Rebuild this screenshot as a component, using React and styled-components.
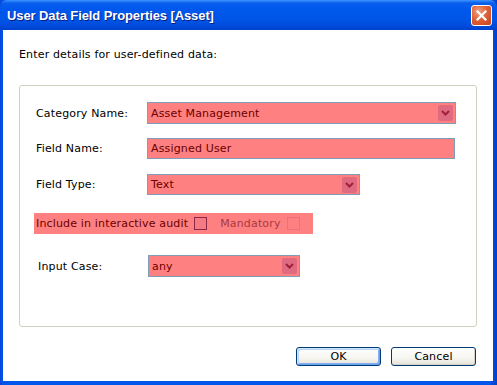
import React from "react";
import styled, { createGlobalStyle } from "styled-components";

const Global = createGlobalStyle`
  html, body { margin: 0; padding: 0; background: #fff; }
  body { font-family: "DejaVu Sans", Verdana, sans-serif; font-size: 11px; letter-spacing: 0.16px; }
`;

const Window = styled.div`
  width: 497px;
  height: 385px;
  display: flex;
  flex-direction: column;
  background: linear-gradient(90deg, #0a46d8 0px, #0055ea 3px, #0055ea 490px, #0040c8 497px);
  box-sizing: border-box;
`;

const TitleBar = styled.div`
  height: 30px;
  flex: 0 0 30px;
  display: flex;
  align-items: center;
  justify-content: space-between;
  padding: 0 5px 0 7px;
  box-sizing: border-box;
  border-radius: 7px 7px 0 0;
  background: linear-gradient(180deg, #3d95ff 0px, #0a5fea 3px, #0058ee 8px, #0055e6 20px, #0048d8 27px, #0040cc 30px);
`;

const Title = styled.span`
  color: #fff;
  font-family: "Liberation Sans", Arial, sans-serif;
  font-weight: bold;
  font-size: 13px;
  letter-spacing: -0.1px;
  text-shadow: 1px 1px 0 #0a1e80;
`;

const CloseButton = styled.div`
  width: 19px;
  height: 19px;
  margin-top: 1px;
  border: 1px solid #fff;
  border-radius: 3px;
  background: radial-gradient(circle at 35% 30%, #f0a080 0%, #e0623a 45%, #c8401a 100%);
  display: flex;
  align-items: center;
  justify-content: center;
`;

const Body = styled.div`
  flex: 1;
  margin: 0 4px 4px 3px;
  background: #fff;
  display: flex;
  flex-direction: column;
  padding: 18px 16px 0 16px;
  color: #000;
`;

const Intro = styled.div`
  line-height: 14px;
`;

const Group = styled.div`
  margin-top: 23px;
  height: 242px;
  box-sizing: border-box;
  border: 1px solid #d0d0bf;
  border-radius: 3px;
  padding: 16px 0 0 16px;
  display: flex;
  flex-direction: column;
`;

const Row = styled.div`
  display: flex;
  align-items: center;
  margin-top: ${(p) => p.$gap || 0}px;
  height: ${(p) => p.$h || 22}px;
`;

const Label = styled.div`
  width: ${(p) => p.$w || 111}px;
  padding-left: ${(p) => p.$indent || 0}px;
  box-sizing: border-box;
  flex: 0 0 auto;
`;

const Field = styled.div`
  width: ${(p) => p.$w}px;
  height: ${(p) => p.$h || 22}px;
  box-sizing: border-box;
  border: 1px solid #7f9db9;
  background: #ff8080;
  color: #6a0000;
  display: flex;
  align-items: center;
  justify-content: space-between;
  padding: 0 2px 0 3px;
`;

const DropButton = styled.div`
  width: 15px;
  height: 16px;
  border-radius: 2px;
  background: #e06a80;
  display: flex;
  align-items: center;
  justify-content: center;
`;

const AuditStrip = styled.div`
  display: flex;
  align-items: center;
  width: 279px;
  height: 21px;
  margin-left: -2px;
  padding-left: 2px;
  box-sizing: border-box;
  background: #ff8080;
  color: #6a0000;
`;

const Check = styled.div`
  width: 13px;
  height: 13px;
  box-sizing: border-box;
  border: 1px solid ${(p) => (p.$disabled ? "#ee7080" : "#8c2848")};
  background: ${(p) => (p.$disabled ? "#ff8080" : "#f57a82")};
  margin-left: ${(p) => p.$ml}px;
`;

const Muted = styled.span`
  color: #a83a40;
  margin-left: 13px;
`;

const Buttons = styled.div`
  display: flex;
  justify-content: flex-end;
  gap: 10px;
  margin-top: 20px;
  padding-right: 1px;
`;

const Button = styled.div`
  width: 85px;
  height: 19px;
  box-sizing: border-box;
  border: 1px solid #003c74;
  border-radius: 3px;
  display: flex;
  align-items: center;
  justify-content: center;
  background: linear-gradient(180deg, #ffffff 0%, #f6f5f0 60%, #e3e1d6 100%);
  box-shadow: ${(p) =>
    p.$default
      ? "inset 1px 1px 0 #cee7ff, inset -1px -1px 0 #69a3ec, inset 2px 2px 0 #bcd4f6, inset -2px -2px 0 #89adf4"
      : "inset -1px -1px 0 #d6d0c5"};
`;

const Chevron = () => (
  <svg width="9" height="6" viewBox="0 0 9 6">
    <path d="M1 1 L4.5 4.5 L8 1" fill="none" stroke="#a0203c" strokeWidth="2" />
  </svg>
);

const Select = ({ w, h, children }) => (
  <Field $w={w} $h={h}>
    <span>{children}</span>
    <DropButton>
      <Chevron />
    </DropButton>
  </Field>
);

export default function App() {
  return (
    <>
      <Global />
      <Window>
        <TitleBar>
          <Title>User Data Field Properties [Asset]</Title>
          <CloseButton>
            <svg width="11" height="11" viewBox="0 0 11 11">
              <path d="M1.5 1.5 L9.5 9.5 M9.5 1.5 L1.5 9.5" stroke="#fff" strokeWidth="2.2" strokeLinecap="square" />
            </svg>
          </CloseButton>
        </TitleBar>
        <Body>
          <Intro>Enter details for user-defined data:</Intro>
          <Group>
            <Row $h={22}>
              <Label>Category Name:</Label>
              <Select w={309} h={22}>Asset Management</Select>
            </Row>
            <Row $gap={14} $h={21}>
              <Label>Field Name:</Label>
              <Field $w={308} $h={21}>Assigned User</Field>
            </Row>
            <Row $gap={15} $h={21}>
              <Label>Field Type:</Label>
              <Select w={213} h={21}>Text</Select>
            </Row>
            <Row $gap={18} $h={21}>
              <AuditStrip>
                Include in interactive audit
                <Check $ml={6} />
                <Muted>Mandatory</Muted>
                <Check $ml={6} $disabled />
              </AuditStrip>
            </Row>
            <Row $gap={21} $h={22}>
              <Label $indent={2} $w={112}>Input Case:</Label>
              <Select w={152} h={22}>any</Select>
            </Row>
          </Group>
          <Buttons>
            <Button $default>OK</Button>
            <Button>Cancel</Button>
          </Buttons>
        </Body>
      </Window>
    </>
  );
}
